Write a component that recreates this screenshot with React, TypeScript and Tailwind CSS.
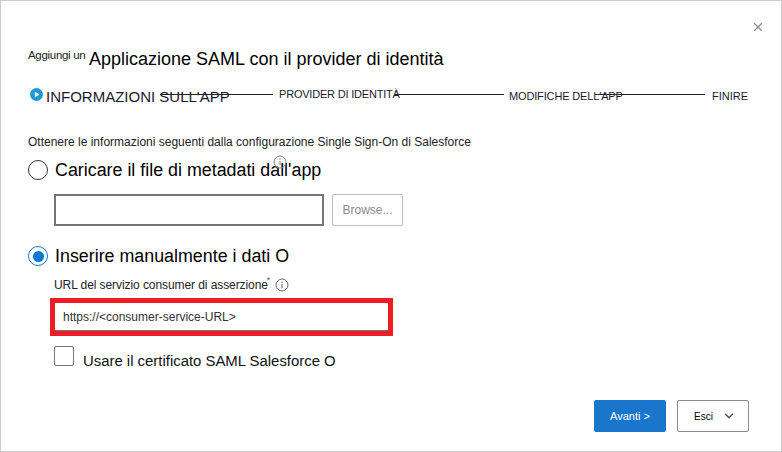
import { ChevronDown, X } from "lucide-react";

const InfoIcon = ({ className }: { className: string }) => (
  <svg viewBox="0 0 14 14" className={className} fill="none" stroke="currentColor">
    <circle cx="7" cy="7" r="6" strokeWidth="1" />
    <path d="M7 6v4.2" strokeWidth="1.1" />
    <path d="M7 3.6v1.1" strokeWidth="1.1" />
  </svg>
);

const StepLine = ({ className }: { className: string }) => (
  <div className={`h-px bg-[#222] self-start mt-[6px] shrink-0 ${className}`} />
);

const Radio = ({ checked }: { checked?: boolean }) => (
  <div
    className={`w-[20px] h-[20px] rounded-full border bg-white flex items-center justify-center shrink-0 ${
      checked ? "border-[#0f78d4]" : "border-[#333]"
    }`}
  >
    {checked && <div className="w-[11px] h-[11px] rounded-full bg-[#0f78d4]" />}
  </div>
);

export default function App() {
  return (
    <div className="w-[782px] h-[452px] border border-[#cccccc] bg-white font-['Liberation_Sans',Arial,sans-serif] text-black overflow-hidden flex flex-col">
      {/* Close */}
      <div className="flex justify-end pt-[19px] pr-[16px] h-[45px] shrink-0">
        <X className="w-[14px] h-[14px] text-[#8a8a8a]" strokeWidth={2} />
      </div>

      {/* Title */}
      <div className="flex items-start pl-[27px] h-[26px] shrink-0">
        <span className="text-[11.5px] leading-[14px] mt-[2px] tracking-[-0.3px] text-[#222] w-[61px] whitespace-nowrap">
          Aggiungi un
        </span>
        <h1 className="text-[18px] leading-[26px] font-normal whitespace-nowrap">
          Applicazione SAML con il provider di identità
        </h1>
      </div>

      {/* Stepper */}
      <div className="flex items-start pl-[29px] mt-[16px] h-[20px] shrink-0 whitespace-nowrap text-[#1a1a2e]">
        <svg viewBox="0 0 14 14" className="w-[13px] h-[13px] shrink-0">
          <circle cx="7" cy="7" r="7" fill="#1b9ad6" />
          <path d="M5.2 3.9v6.2L10 7z" fill="#fff" />
        </svg>
        <span className="text-[15px] leading-[18px] ml-[3px] w-[184px] shrink-0">INFORMAZIONI SULL'APP</span>
        <StepLine className="w-[113px] -ml-[70px]" />
        <span className="text-[11px] leading-[16px] ml-[6px] -mt-[2px] w-[120px] shrink-0 tracking-[-0.2px]">
          PROVIDER DI IDENTITÀ
        </span>
        <StepLine className="w-[109px] -ml-[4px]" />
        <span className="text-[11px] leading-[16px] ml-[5px] w-[113px] shrink-0 tracking-[-0.15px]">
          MODIFICHE DELL'APP
        </span>
        <StepLine className="w-[110px] -ml-[27px]" />
        <span className="text-[11px] leading-[16px] ml-[7px]">FINIRE</span>
      </div>

      <p className="text-[12px] leading-[16px] pl-[27px] mt-[26px] shrink-0 whitespace-nowrap text-[#222]">
        Ottenere le informazioni seguenti dalla configurazione Single Sign-On di Salesforce
      </p>

      {/* Metadata file option */}
      <div className="flex items-center pl-[27px] mt-[8px] h-[24px] shrink-0 relative">
        <Radio />
        <span className="text-[17.85px] ml-[7px] whitespace-nowrap">Caricare il file di metadati dall'app</span>
        <InfoIcon className="absolute left-[272px] top-[-3px] w-[14px] h-[14px] text-[#888]" />
      </div>
      <div className="flex pl-[53px] gap-[8px] mt-[12px] shrink-0">
        <div className="w-[270px] h-[32px] border-2 border-[#767676] bg-white" />
        <button className="w-[71px] h-[32px] border border-[#bdbdbd] rounded-[2px] text-[12px] text-[#8a8a8a]">
          Browse...
        </button>
      </div>

      {/* Manual option */}
      <div className="flex items-center pl-[27px] mt-[18px] h-[24px] shrink-0">
        <Radio checked />
        <span className="text-[17.85px] ml-[7px] whitespace-nowrap">Inserire manualmente i dati O</span>
      </div>

      <div className="flex items-center pl-[53px] mt-[9px] h-[16px] shrink-0 whitespace-nowrap">
        <span className="text-[12px] tracking-[-0.08px] text-[#222]">URL del servizio consumer di asserzione</span>
        <span className="text-[9px] leading-[9px] text-[#555] self-start -ml-[1px] -mt-[1px]">*</span>
        <InfoIcon className="ml-[5px] w-[14px] h-[14px] text-[#666]" />
      </div>

      {/* Highlighted URL input */}
      <div className="ml-[49px] mt-[5px] w-[343px] h-[38px] border-[5px] border-[#ee1c25] shrink-0">
        <div className="h-full border-b border-[#767676] pl-[8px] flex items-center text-[12px] text-[#333]">
          https://&lt;consumer-service-URL&gt;
        </div>
      </div>

      <div className="flex items-start pl-[53px] mt-[10px] shrink-0">
        <div className="w-[20px] h-[20px] border border-[#767676] rounded-[2px] bg-white shrink-0" />
        <span className="text-[14.9px] leading-[18px] ml-[9px] mt-[6px] whitespace-nowrap text-[#111]">
          Usare il certificato SAML Salesforce O
        </span>
      </div>

      {/* Footer */}
      <div className="flex justify-end gap-[11px] pr-[32px] mt-[30px] shrink-0">
        <button className="w-[72px] h-[32px] bg-[#1a75cc] rounded-[2px] text-white text-[11px]">Avanti &gt;</button>
        <button className="w-[72px] h-[32px] border border-[#8a8a8a] rounded-[2px] bg-white flex items-center pl-[16px] pr-[12px] justify-between text-[10px]">
          <span>Esci</span>
          <ChevronDown className="w-[14px] h-[14px] text-[#555]" strokeWidth={2.5} />
        </button>
      </div>
    </div>
  );
}
